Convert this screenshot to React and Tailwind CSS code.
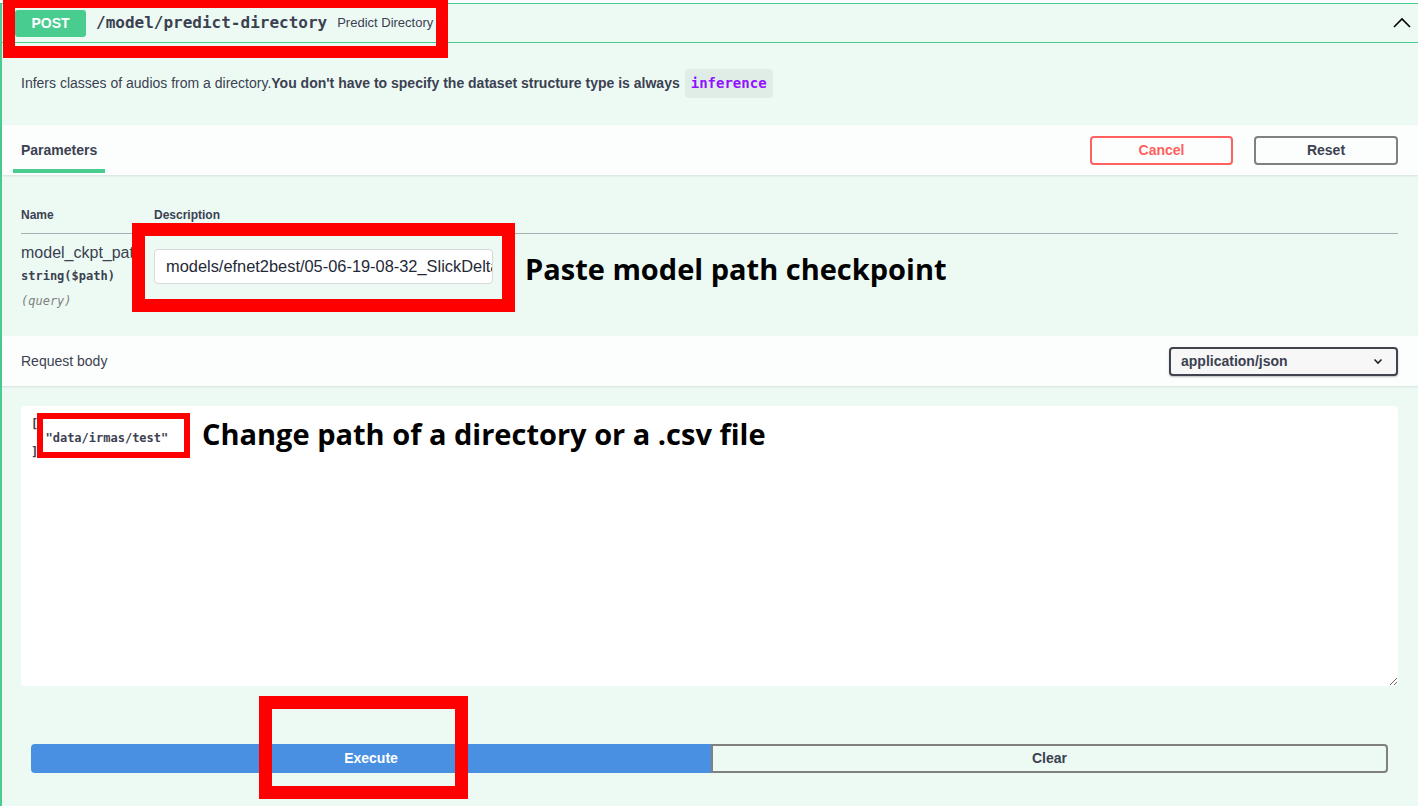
const sans = { fontFamily: '"Liberation Sans", Arial, sans-serif' };

function ChevronUp() {
  return (
    <svg width="20" height="20" viewBox="0 0 20 20" className="text-black">
      <path d="M2 14 L10 6 L18 14" fill="none" stroke="currentColor" strokeWidth="1.6" />
    </svg>
  );
}

function ChevronDown() {
  return (
    <svg width="12" height="12" viewBox="0 0 12 12">
      <path d="M2.5 4.5 L6 8 L9.5 4.5" fill="none" stroke="#222" strokeWidth="1.6" />
    </svg>
  );
}

function Annotation({ className }) {
  return <div className={`absolute border-[#ff0000] pointer-events-none ${className}`} />;
}

export default function App() {
  return (
    <div className="relative w-full h-[806px] overflow-hidden bg-white text-[#3b4151]" style={sans}>
      <div className="mt-[3px] h-[803px] border-l-2 border-t border-[#49cc90] bg-[#edfaf4]">
        {/* summary */}
        <div className="h-[39px] flex items-center pl-[13px] pr-[6px] border-b border-[#49cc90]">
          <span className="w-[71px] h-[27px] rounded-[3px] bg-[#49cc90] text-white text-[14px] font-bold flex items-center justify-center">
            POST
          </span>
          <span className="ml-[10px] text-[16px] font-bold font-['DejaVu_Sans_Mono',monospace]">
            /model/predict-directory
          </span>
          <span className="ml-[10px] text-[13px]">Predict Directory</span>
          <span className="ml-auto"><ChevronUp /></span>
        </div>

        {/* description */}
        <div className="h-[82px] flex items-center pb-[2px] px-[19px] text-[14px]">
          <span>Infers classes of audios from a directory.</span>
          <span className="font-bold">You don't have to specify the dataset structure type is always</span>
          <code className="ml-[5px] px-[6px] py-[4px] rounded bg-black/5 text-[#9012fe] font-bold text-[14px] font-['DejaVu_Sans_Mono',monospace]">
            inference
          </code>
        </div>

        {/* parameters header */}
        <div className="h-[50px] flex items-center bg-white/80 shadow-[0_1px_2px_rgba(0,0,0,0.1)] pl-[11px] pr-[20px]">
          <div className="h-full flex flex-col justify-center relative px-[8px]">
            <span className="text-[14px] font-bold">Parameters</span>
            <span className="absolute left-0 right-0 bottom-[2px] h-[4px] bg-[#49cc90]" />
          </div>
          <button className="ml-auto w-[143px] h-[29px] border-2 border-[#ff6060] rounded text-[#ff6060] text-[14px] font-bold">
            Cancel
          </button>
          <button className="ml-[21px] w-[144px] h-[29px] border-2 border-[#808080] rounded text-[14px] font-bold">
            Reset
          </button>
        </div>

        {/* parameters table */}
        <div className="h-[161px] pt-[31px] pl-[19px] pr-[20px]">
          <div className="flex border-b border-[#3b4151]/40 pb-[9px] text-[12px] font-bold">
            <div className="w-[133px]">Name</div>
            <div>Description</div>
          </div>
          <div className="flex pt-[9px]">
            <div className="w-[133px] flex flex-col">
              <span className="text-[16px] leading-[20px]">model_ckpt_path</span>
              <span className="mt-[4px] text-[12px] font-bold font-['DejaVu_Sans_Mono',monospace]">string($path)</span>
              <span className="mt-[7px] text-[12px] italic text-[#808080] font-['DejaVu_Sans_Mono',monospace]">(query)</span>
            </div>
            <div className="pt-[6px]">
              <div className="w-[339px] h-[35px] border border-[#d9d9d9] rounded bg-white pl-[11px] flex items-center overflow-hidden whitespace-nowrap text-[16.4px] text-[#1f2937]">
                models/efnet2best/05-06-19-08-32_SlickDelta
              </div>
            </div>
          </div>
        </div>

        {/* request body header */}
        <div className="h-[50px] flex items-center bg-white/80 shadow-[0_1px_2px_rgba(0,0,0,0.1)] pl-[19px] pr-[20px]">
          <span className="text-[14px]">Request body</span>
          <div className="ml-auto w-[229px] h-[29px] border-2 border-[#41444e] rounded bg-[#f7f7f7] shadow-[0_1px_2px_rgba(0,0,0,0.25)] flex items-center pl-[10px] pr-[12px]">
            <span className="text-[14px] font-bold">application/json</span>
            <span className="ml-auto"><ChevronDown /></span>
          </div>
        </div>

        {/* body */}
        <div className="pt-[20px] pl-[19px] pr-[20px]">
          <textarea
            readOnly
            defaultValue={'[\n  "data/irmas/test"\n]'}
            className="block w-full h-[280px] rounded bg-white px-[10px] pt-[11px] pb-[10px] text-[12px] leading-[14px] font-semibold text-[#3b4151] outline-none resize-y font-['DejaVu_Sans_Mono',monospace]"
          />
        </div>

        {/* execute */}
        <div className="flex pt-[58px] pl-[29px] pr-[30px]">
          <button className="w-[680px] h-[29px] rounded-l bg-[#4990e2] text-white text-[14px] font-bold">
            Execute
          </button>
          <button className="flex-1 h-[29px] rounded-r border-2 border-[#808080] text-[14px] font-bold">
            Clear
          </button>
        </div>
      </div>

      {/* annotations */}
      <Annotation className="left-[3px] top-[-5px] w-[445px] h-[63px] border-[12px] border-t-[13px]" />
      <Annotation className="left-[132px] top-[223px] w-[383px] h-[89px] border-[13px]" />
      <Annotation className="left-[37px] top-[413px] w-[153px] h-[45px] border-[6px]" />
      <Annotation className="left-[259px] top-[696px] w-[209px] h-[103px] border-[13px]" />
      <div className="absolute left-[525px] top-[249px] text-[29px] leading-[40px] font-bold text-black font-['Open_Sans',sans-serif]">
        Paste model path checkpoint
      </div>
      <div className="absolute left-[202px] top-[414px] text-[29px] leading-[40px] font-bold text-black font-['Open_Sans',sans-serif]">
        Change path of a directory or a .csv file
      </div>
    </div>
  );
}
